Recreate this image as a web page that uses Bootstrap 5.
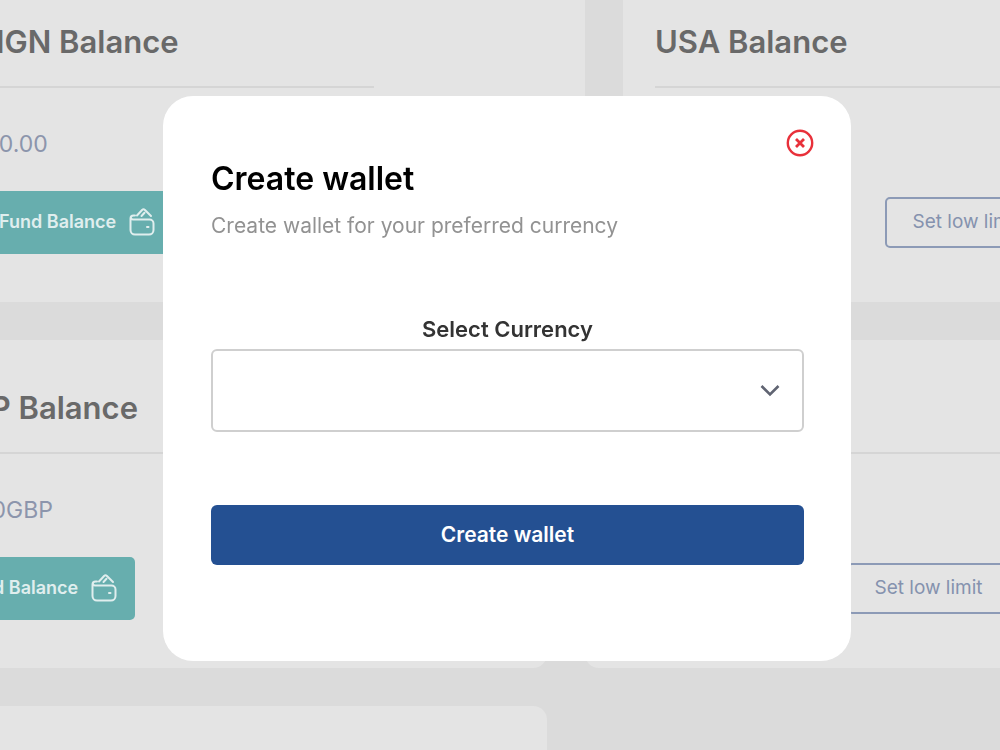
<!DOCTYPE html>
<html lang="en">
<head>
<meta charset="utf-8">
<meta name="viewport" content="width=device-width, initial-scale=1">
<title>Create wallet</title>
<link rel="stylesheet" href="https://cdn.jsdelivr.net/npm/bootstrap@5.3.0/dist/css/bootstrap.min.css">
<style>
  body { background: #dbdbdb; font-family: Inter, "Liberation Sans", sans-serif; height: 100vh; }
  /* the board is scrolled under the dialog */
  .board { margin-top: -26px; gap: 38px; }
  .board-row { gap: 38px; margin-left: -89px; }
  .board-row.first { margin-left: -51px; }
  .balance { flex: 0 0 636px; min-height: 328px; padding: 48px 211px 48px 32px; background: #e4e4e4; border: 0; border-radius: 14px; }
  .balance-title { height: 40px; margin: 0; font-size: 31px; line-height: 40px; font-weight: 600; color: #696969; white-space: nowrap; }
  .balance hr { margin: 24px 0 40px; border-top: 2px solid #d5d5d5; opacity: 1; }
  .amount { height: 32px; margin: 0 0 31px; font-size: 23px; line-height: 32px; color: #8c95ac; }
  .actions { height: 63px; }
  .btn-fund, .btn-fund:hover { width: 192px; height: 63px; padding: 0 18px 2px; background: #67aeae; color: #e0eeee; border: 0; border-radius: 5px; font-size: 18px; font-weight: 600; white-space: nowrap; }
  .btn-limit, .btn-limit:hover { width: 163px; height: 51px; padding: 0; border: 2px solid #8c9ab6; border-radius: 5px; color: #8592ae; font-size: 19px; }
  .wallet-modal { padding: 0 0 0 14px; }
  .wallet-modal .modal-dialog { max-width: 688px; min-height: calc(100vh + 6px); }
  .wallet-modal .modal-content { border: 0; border-radius: 30px; font-family: inherit; }
  .wallet-head { padding: 33px 37px 0; }
  .btn-dismiss { width: 28px; height: 28px; color: #e8303a; }
  .wallet-body { padding: 2px 47px 96px 48px; }
  .wallet-title { margin: 0 0 11px; font-size: 32px; line-height: 40px; font-weight: 600; color: #000; }
  .wallet-note { margin: 0 0 71px; font-size: 21px; line-height: 32px; color: #929292; }
  .wallet-label { margin: 0 0 4px; font-size: 22px; line-height: 32px; font-weight: 600; color: #333; }
  .select-box { height: 83px; margin-bottom: 73px; border: 2px solid #cfcfcf; border-radius: 6px; background-position: right 22px center; background-size: 20px 20px;
    background-image: url("data:image/svg+xml,%3Csvg xmlns='http://www.w3.org/2000/svg' viewBox='0 0 20 20'%3E%3Cpath d='M1.500 6 10 14.500 18.500 6' fill='none' stroke='%23606472' stroke-width='2.600'/%3E%3C/svg%3E"); }
  .btn-create, .btn-create:hover { height: 60px; border: 0; border-radius: 6px; background: #245092; color: #fff; font-size: 21px; font-weight: 600; }
</style>
</head>
<body class="overflow-hidden">
<svg class="d-none">
  <symbol id="wallet" viewBox="0 0 26 28" fill="none" stroke="currentColor" stroke-width="2" stroke-linecap="round" stroke-linejoin="round">
    <path d="M6 7.500H4.500A3 3 0 0 0 1.500 10.500V22a4.500 4.500 0 0 0 4.500 4.500h14a4.500 4.500 0 0 0 4.500-4.500v-6.500a4 4 0 0 0-4-4H4a2 2 0 0 1-2-2M8 7.500 13.300 1.800a1.600 1.600 0 0 1 2.400 0L22 8M12.500 8 15.500 4.800M18 19h1.500"/>
  </symbol>
</svg>

<main class="board d-flex flex-column">
  <div class="board-row first d-flex">
    <section class="card balance">
      <h2 class="balance-title">NGN Balance</h2>
      <hr>
      <p class="amount">₦0.00</p>
      <div class="actions d-flex align-items-center">
        <button type="button" class="btn btn-fund d-flex align-items-center justify-content-between"><span>Fund Balance</span><svg width="26" height="28" aria-hidden="true"><use href="#wallet"/></svg></button>
      </div>
    </section>
    <section class="card balance">
      <h2 class="balance-title">USA Balance</h2>
      <hr>
      <div class="amount"></div>
      <div class="actions d-flex align-items-center justify-content-end">
        <button type="button" class="btn btn-limit">Set low limit</button>
      </div>
    </section>
  </div>
  <div class="board-row d-flex">
    <section class="card balance">
      <h2 class="balance-title ps-1">GBP Balance</h2>
      <hr>
      <p class="amount">£0.00GBP</p>
      <div class="actions d-flex align-items-center">
        <button type="button" class="btn btn-fund d-flex align-items-center justify-content-between"><span>Fund Balance</span><svg width="26" height="28" aria-hidden="true"><use href="#wallet"/></svg></button>
      </div>
    </section>
    <section class="card balance">
      <div class="balance-title"></div>
      <hr>
      <div class="amount"></div>
      <div class="actions d-flex align-items-center justify-content-end">
        <button type="button" class="btn btn-limit">Set low limit</button>
      </div>
    </section>
  </div>
  <div class="board-row d-flex">
    <section class="card balance"></section>
  </div>
</main>

<div class="modal d-block overflow-hidden wallet-modal" role="dialog" aria-labelledby="walletTitle">
  <div class="modal-dialog modal-dialog-centered my-0">
    <div class="modal-content">
      <div class="wallet-head d-flex justify-content-end">
        <button type="button" class="btn btn-dismiss p-0 border-0 d-flex" aria-label="Close">
          <svg width="28" height="28" viewBox="0 0 28 28" fill="none" stroke="currentColor"><circle cx="14" cy="14" r="12.200" stroke-width="2.400"/><path d="M10 10l8 8M18 10l-8 8" stroke-width="2.800"/></svg>
        </button>
      </div>
      <form class="wallet-body d-flex flex-column">
        <h1 class="wallet-title" id="walletTitle">Create wallet</h1>
        <p class="wallet-note">Create wallet for your preferred currency</p>
        <label class="wallet-label text-center" for="currency">Select Currency</label>
        <select class="form-select select-box" id="currency"><option></option></select>
        <button type="button" class="btn btn-create">Create wallet</button>
      </form>
    </div>
  </div>
</div>
<script src="https://cdn.jsdelivr.net/npm/bootstrap@5.3.0/dist/js/bootstrap.bundle.min.js"></script>
</body>
</html>
